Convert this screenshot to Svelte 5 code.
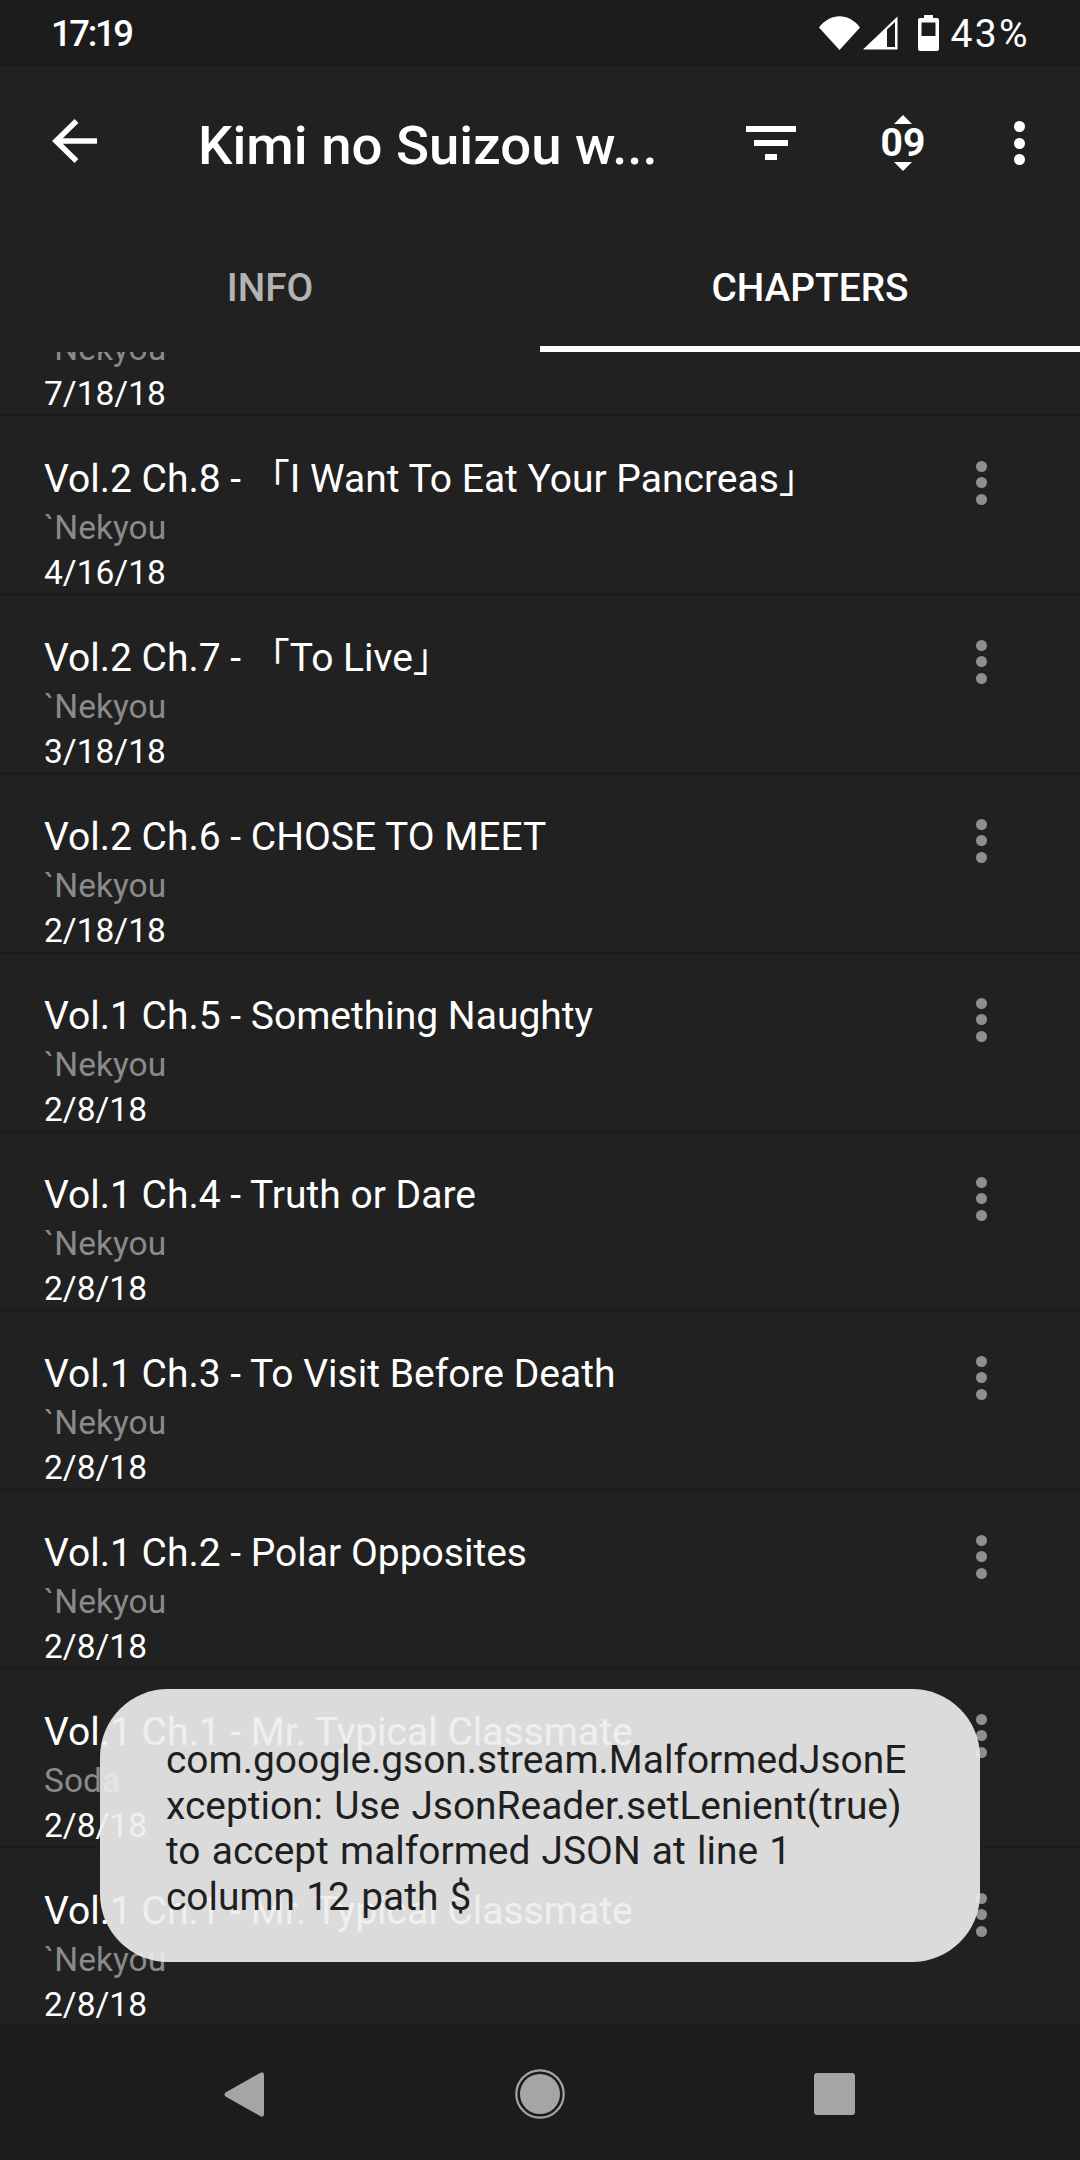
<script>
  const rows = [
    { title: '\u00a0', by: '`Nekyou', date: '7/18/18' },
    { title: 'Vol.2 Ch.8 - 「I Want To Eat Your Pancreas」', by: '`Nekyou', date: '4/16/18' },
    { title: 'Vol.2 Ch.7 - 「To Live」', by: '`Nekyou', date: '3/18/18' },
    { title: 'Vol.2 Ch.6 - CHOSE TO MEET', by: '`Nekyou', date: '2/18/18' },
    { title: 'Vol.1 Ch.5 - Something Naughty', by: '`Nekyou', date: '2/8/18' },
    { title: 'Vol.1 Ch.4 - Truth or Dare', by: '`Nekyou', date: '2/8/18' },
    { title: 'Vol.1 Ch.3 - To Visit Before Death', by: '`Nekyou', date: '2/8/18' },
    { title: 'Vol.1 Ch.2 - Polar Opposites', by: '`Nekyou', date: '2/8/18' },
    { title: 'Vol.1 Ch.1 - Mr. Typical Classmate', by: 'Soda', date: '2/8/18' },
    { title: 'Vol.1 Ch.1 - Mr. Typical Classmate', by: '`Nekyou', date: '2/8/18' }
  ];
</script>

<div class="screen">
  <header class="status">
    <span class="clock">17:19</span>
    <div class="status-right">
      <svg class="wifi" viewBox="0 0 41 34" width="41" height="34"><path d="M0 11.5 C11.5 -3.5 29.5 -3.5 41 11.5 L20.5 34 Z" fill="#fff"/></svg>
      <svg class="signal" viewBox="0 0 35 34" width="35" height="34"><path d="M0 33.5 L34.5 0.5 V33.5 Z M24 31 H32 V6 L24 13.5 Z" fill="#fff" fill-rule="evenodd"/></svg>
      <svg class="battery" viewBox="0 0 21 36" width="21" height="36"><path d="M6 0 H15 V3 H19 Q21 3 21 5 V34 Q21 36 19 36 H2 Q0 36 0 34 V5 Q0 3 2 3 H6 Z M3.5 7.5 V21 H17.5 V7.5 Z" fill="#fff" fill-rule="evenodd"/></svg>
      <span class="pct">43%</span>
    </div>
  </header>

  <div class="toolbar">
    <svg class="back" viewBox="0 0 48 48" width="48" height="48"><path d="M46 22 H5 M25.5 2 L5 22 L25.5 42" fill="none" stroke="#fff" stroke-width="5.5"/></svg>
    <h1 class="title">Kimi no Suizou w...</h1>
    <svg class="filter" viewBox="0 0 50 34" width="50" height="34"><path d="M0 0 H50 V6 H0 Z M8 14 H42 V20 H8 Z M19 28 H31 V34 H19 Z" fill="#fff"/></svg>
    <div class="sort">
      <svg viewBox="0 0 18 9" width="18" height="9"><path d="M9 0 L18 9 H0 Z" fill="#fff"/></svg>
      <span class="sort-num">09</span>
      <svg viewBox="0 0 18 9" width="18" height="9"><path d="M9 9 L18 0 H0 Z" fill="#fff"/></svg>
    </div>
    <div class="dots white"><i></i><i></i><i></i></div>
  </div>

  <nav class="tabs">
    <div class="tab">INFO</div>
    <div class="tab active">CHAPTERS</div>
  </nav>

  <main class="list">
    <div class="list-inner">
      {#each rows as r}
        <article class="row">
          <div class="row-text">
            <div class="row-title">{r.title}</div>
            <div class="row-by">{r.by}</div>
            <div class="row-date">{r.date}</div>
          </div>
          <div class="dots grey"><i></i><i></i><i></i></div>
        </article>
      {/each}
    </div>
  </main>

  <footer class="navbar">
    <svg viewBox="0 0 40 45" width="40" height="45"><path d="M36 1 Q40 -1 40 3 V42 Q40 46 36 44 L1.5 24.5 Q-0.5 22.5 1.5 20.5 Z" fill="#a5a5a5"/></svg>
    <svg class="home" viewBox="0 0 50 50" width="50" height="50"><circle cx="25" cy="25" r="23.7" fill="none" stroke="#a5a5a5" stroke-width="2.2"/><circle cx="25" cy="25" r="20" fill="#a5a5a5"/></svg>
    <svg viewBox="0 0 41 42" width="41" height="42"><rect width="41" height="42" rx="3" fill="#a5a5a5"/></svg>
  </footer>

  <div class="toast">com.google.gson.stream.MalformedJsonE<br/>xception: Use JsonReader.setLenient(true)<br/>to accept malformed JSON at line 1<br/>column 12 path $</div>
</div>

<style>
  :global(body) { margin: 0; background: #212121; }
  .screen {
    position: relative;
    width: 1080px;
    height: 2160px;
    display: flex;
    flex-direction: column;
    overflow: hidden;
    background: #212121;
    color: #fff;
    font-family: Roboto, "Noto Sans CJK JP", sans-serif;
  }
  .status {
    height: 66px;
    flex: none;
    box-sizing: border-box;
    background: #1c1c1c;
    display: flex;
    align-items: center;
    justify-content: space-between;
    padding: 0 52px 0 51px;
  }
  .clock { font-size: 36.5px; font-weight: 500; line-height: 66px; letter-spacing: -2.4px; padding-top: 2px; }
  .pct { font-size: 39px; font-weight: 400; line-height: 66px; margin-left: 11px; letter-spacing: 2.4px; padding-top: 2px; margin-right: -2px; }
  .status-right { display: flex; align-items: center; }
  .signal { margin-left: 3px; }
  .battery { margin-left: 20px; }
  .wifi, .signal, .battery { display: block; }
  .toolbar {
    height: 154px;
    flex: none;
    display: flex;
    align-items: center;
  }
  .back { margin-left: 51px; flex: none; }
  .title {
    margin: 0 0 0 99px;
    padding-top: 4px;
    width: 548px;
    font-size: 54.5px;
    font-weight: 500;
    white-space: nowrap;
  }
  .filter { flex: none; }
  .sort {
    flex: none;
    width: 60px;
    margin-left: 77px;
    display: flex;
    flex-direction: column;
    align-items: center;
    gap: 4px;
  }
  .sort svg { display: block; }
  .sort-num { font-size: 39px; font-weight: 700; line-height: 30px; }
  .dots { display: flex; flex-direction: column; gap: 5.3px; flex: none; }
  .dots i { display: block; width: 11px; height: 11px; border-radius: 50%; }
  .dots.white { margin-left: 80.5px; }
  .dots.white i { background: #fff; }
  .dots.grey { margin-top: 7px; }
  .dots.grey i { background: #8f8f8f; }
  .tabs { height: 132px; flex: none; display: flex; }
  .tab {
    flex: 1;
    display: flex;
    align-items: center;
    justify-content: center;
    box-sizing: border-box;
    padding-top: 2px;
    font-size: 38.8px;
    font-weight: 500;
    color: #b3b3b3;
  }
  .tab.active { color: #fff; border-bottom: 6px solid #fff; padding-top: 8px; }
  .list { flex: 1; min-height: 0; overflow: hidden; }
  .list-inner { margin-top: -114px; }
  .row {
    height: 179px;
    box-sizing: border-box;
    border-bottom: 3px solid #1c1c1c;
    display: flex;
    align-items: flex-start;
    padding: 37px 93px 0 44px;
  }
  .row-text { flex: 1; min-width: 0; }
  .row-title { font-size: 39px; line-height: 50px; white-space: nowrap; }
  .row-by { font-size: 33.5px; line-height: 48px; color: #8a8a8a; }
  .row-date { font-size: 33.5px; line-height: 41px; }
  .navbar {
    height: 135px;
    flex: none;
    background: #1c1c1c;
    display: flex;
    align-items: center;
    justify-content: space-between;
    box-sizing: border-box;
    padding: 3px 225px 0 224px;
  }
  .home { margin-left: 2px; }
  .toast {
    position: absolute;
    left: 100px;
    top: 1689px;
    width: 880px;
    height: 273px;
    box-sizing: border-box;
    padding: 48px 66px;
    border-radius: 68px;
    background: rgba(237, 237, 237, 0.915);
    color: #1f1f1f;
    font-size: 38.9px;
    line-height: 45.6px;
    word-spacing: 1.6px;
    white-space: nowrap;
  }
</style>
